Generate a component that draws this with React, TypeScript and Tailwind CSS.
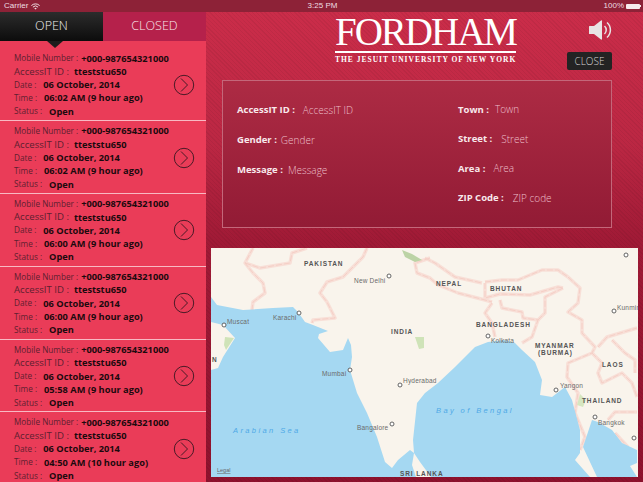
const rows = [
  { time: "06:02 AM (9 hour ago)" },
  { time: "06:02 AM (9 hour ago)" },
  { time: "06:00 AM (9 hour ago)" },
  { time: "06:00 AM (9 hour ago)" },
  { time: "05:58 AM (9 hour ago)" },
  { time: "04:50 AM (10 hour ago)" },
];

function Line({ label, value, gap, size = "text-[8.2px]" }: { label: string; value: string; gap: string; size?: string }) {
  return (
    <div className="flex h-[13.3px] items-center whitespace-nowrap leading-none">
      <span className={`text-[#5e2030] ${size}`}>{label}</span>
      <span className={`text-[9.25px] font-bold text-[#1b0a0e] ${gap}`}>{value}</span>
    </div>
  );
}

function Row({ time, first, last }: { time: string; first: boolean; last: boolean }) {
  return (
    <div
      className={`flex items-center justify-between pl-[14px] pr-[11px] ${first ? "pt-[10.5px] pb-[2px]" : "pt-[3.4px] pb-[2px]"} ${last ? "" : "border-b border-[#f8b9c3]"}`}
    >
      <div>
        <Line label="Mobile Number :" value="+000-987654321000" gap="ml-[3px]" />
        <Line label="AccessIT ID :" value="tteststu650" gap="ml-[5px]" size="text-[9.6px]" />
        <Line label="Date :" value="06 October, 2014" gap="ml-[7px]" />
        <Line label="Time :" value={time} gap="ml-[7px]" />
        <Line label="Status :" value="Open" gap="ml-[7px]" />
      </div>
      <svg width="22" height="22" viewBox="0 0 22 22" fill="none" className="shrink-0">
        <circle cx="11" cy="11" r="9.7" stroke="#4a1a26" strokeWidth="1" />
        <path d="M8 4.5 L14.5 11 L8 17.5" stroke="#4a1a26" strokeWidth="1" />
      </svg>
    </div>
  );
}

function Field({ label, value, gap, height = "h-[30px]" }: { label: string; value: string; gap: string; height?: string }) {
  return (
    <div className={`flex items-center whitespace-nowrap ${height}`}>
      <span className="text-[9.5px] font-bold text-[#f8e9ec]">{label}</span>
      <span className={`text-[10px] font-light text-[#ebbfc9] ${gap}`}>{value}</span>
    </div>
  );
}

const borders = [
  "M253 248 245 263 253 273 263 283 265 293 253 302 252 310",
  "M245 263 260 268 290 263 292 253 307 248",
  "M367 248 363 257 343 277 327 282 320 293 327 302 332 312 335 318 313 320 312 323",
  "M430 258 415 263 417 273 430 278 438 285 458 293 485 300 492 302",
  "M425 258 435 263 455 277 482 283",
  "M485 283 485 298 500 294 530 295 558 287 563 288",
  "M485 282 502 280 518 280 542 270 558 270 568 277",
  "M492 303 485 313 492 323 495 337",
  "M500 300 502 308 522 312 523 318 538 320 532 337 522 343",
  "M563 288 545 297 545 313 538 320",
  "M568 277 580 288 578 303 568 312 582 320 582 333 595 347 592 353 568 363 567 377 578 393 575 413 585 437 580 450",
  "M598 347 607 337 637 328",
  "M592 353 602 363 598 373 602 383 622 373 632 383 637 397",
  "M612 340 625 353 635 360 635 373",
  "M608 420 615 412 637 412",
  "M615 433 628 447",
];

const water1 =
  "M211 477 211 297 217 305 243 310 273 308 293 307 298 312 305 322 313 325 328 331 319 334 318 338 330 352 343 350 348 338 351 345 352 357 350 370 357 393 367 413 377 437 385 462 392 468 398 460 410 450 414 453 413 440 417 403 425 393 438 383 455 367 475 347 488 342 505 340 515 343 522 350 535 362 542 380 540 395 552 397 565 387 572 400 580 430 580 453 575 460 590 477Z";
const water2 = "M597 477 583 447 592 420 598 422 612 430 622 443 637 450 637 463 630 466 637 477Z";

function Map() {
  return (
    <svg
      viewBox="211 248 427 229"
      className="ml-[5px] mt-[20px] block h-[229px] w-[427px] shrink-0"
      style={{ fontFamily: "'Liberation Sans', sans-serif" }}
    >
      <rect x="211" y="248" width="427" height="229" fill="#f9f4ec" />
      <g fill="none" stroke="#f8dfd7" strokeWidth="3.5" strokeLinejoin="round">
        {borders.map((d) => (
          <path key={d} d={d} />
        ))}
      </g>
      <g fill="none" stroke="#f5cfc6" strokeWidth="1" strokeLinejoin="round" strokeDasharray="6 2">
        {borders.map((d) => (
          <path key={d} d={d} />
        ))}
      </g>
      <path d={water1} fill="#a5d8f2" />
      <path d={water2} fill="#a5d8f2" />
      <path d="M211 322 223 325 235 338 223 357 218 368 211 370Z" fill="#f9f4ec" />
      <path d="M414 453 420 462 431 477 416 477 412 465Z" fill="#f9f4ec" />
      <path d="M225 337 234 338 226 350 224 345Z" fill="#cfe3b8" />
      <path d="M415 337 424 337 424 348 419 349Z" fill="#cfe3b8" />
      <path d="M402 250 412 254 422 260 415 262 405 257Z" fill="#bcd3a5" />
      <path d="M580 394 586 400 583 407 577 405Z" fill="#d6e6c0" />
      <g fill="#fff" stroke="#555" strokeWidth="0.9">
        {[
          [389, 276], [299, 313], [224, 325], [350, 370], [400, 385], [392, 424],
          [488, 336], [556, 390], [595, 417], [626, 255], [614, 311], [634, 438],
        ].map(([x, y]) => (
          <circle key={`${x}-${y}`} cx={x} cy={y} r="2" />
        ))}
      </g>
      <g fill="#6b6b6b" fontSize="6.5" letterSpacing="0.2">
        <text x="354" y="283">New Delhi</text>
        <text x="273" y="320">Karachi</text>
        <text x="227" y="324">Muscat</text>
        <text x="322" y="376">Mumbai</text>
        <text x="403" y="383">Hyderabad</text>
        <text x="357" y="430">Bangalore</text>
        <text x="491" y="343">Kolkata</text>
        <text x="560" y="388">Yangon</text>
        <text x="598" y="425">Bangkok</text>
        <text x="617" y="310">Kunming</text>
      </g>
      <g fill="#555" fontSize="6.5" fontWeight="700" letterSpacing="0.9">
        <text x="304" y="266">PAKISTAN</text>
        <text x="391" y="334">INDIA</text>
        <text x="436" y="286">NEPAL</text>
        <text x="490" y="291">BHUTAN</text>
        <text x="476" y="327">BANGLADESH</text>
        <text x="535" y="348">MYANMAR</text>
        <text x="538" y="355">(BURMA)</text>
        <text x="602" y="367">LAOS</text>
        <text x="582" y="403">THAILAND</text>
        <text x="400" y="476">SRI LANKA</text>
        <text x="212" y="362">N</text>
      </g>
      <g fill="#4fa8e6" fontSize="7.5" fontStyle="italic" letterSpacing="2.4">
        <text x="233" y="433">Arabian Sea</text>
        <text x="436" y="413">Bay of Bengal</text>
      </g>
      <text x="217" y="472" fill="#666" fontSize="5.5" textDecoration="underline">Legal</text>
    </svg>
  );
}

export default function App() {
  return (
    <div
      className="flex h-[482px] w-[643px] flex-col overflow-hidden bg-[image:repeating-linear-gradient(45deg,rgba(0,0,0,0.05)_0,rgba(0,0,0,0.05)_1px,transparent_1px,transparent_3px),linear-gradient(180deg,#cc2d4a_0%,#bb2743_30%,#a01a36_50%,#8e122d_100%)]"
      style={{ fontFamily: "'Open Sans', sans-serif" }}
    >
      <div className="flex h-3 shrink-0 items-center justify-between bg-[#8d2237] pl-1 pr-[2px] text-[8px] leading-none text-[#eedde0]" style={{ fontFamily: "'Liberation Sans', sans-serif" }}>
        <div className="flex flex-1 items-center gap-[3px]">
          <span>Carrier</span>
          <svg width="9" height="7" viewBox="0 0 9 7" fill="none" stroke="#eedde0" strokeWidth="1">
            <path d="M.4 2.6a5.8 5.8 0 0 1 8.2 0" />
            <path d="M1.9 4.1a3.7 3.7 0 0 1 5.2 0" />
            <path d="M4.5 6.6 3.3 5.4a1.7 1.7 0 0 1 2.4 0Z" fill="#eedde0" stroke="none" />
          </svg>
        </div>
        <span>3:25 PM</span>
        <div className="flex flex-1 items-center justify-end gap-[2px]">
          <span>100%</span>
          <span className="h-[5px] w-[14px] rounded-[1px] bg-[#f5eaec]" />
          <span className="ml-[-2px] h-[2px] w-px bg-[#f5eaec]" />
        </div>
      </div>

      <div className="flex min-h-0 flex-1">
        <aside className="flex w-[206px] shrink-0 flex-col bg-[#ea3c58]">
          <div className="flex h-[29px] shrink-0 text-[12.5px] font-light">
            <div className="relative flex w-[103px] items-center justify-center bg-[linear-gradient(180deg,#2c2c2c,#0c0c0c)] text-[#f0f0f0]">
              OPEN
              <span className="absolute left-[47px] top-[29px] h-0 w-0 border-x-[8px] border-t-[7px] border-x-transparent border-t-[#1c1c1c]" />
            </div>
            <div className="flex w-[103px] items-center justify-center bg-[#b5214b] text-[#f8e6ea]">CLOSED</div>
          </div>
          {rows.map((r, i) => (
            <Row key={i} time={r.time} first={i === 0} last={i === 5} />
          ))}
        </aside>

        <main className="flex min-w-0 flex-1 flex-col">
          <header className="flex h-[68px] shrink-0 pl-[129px] pt-[5px]">
            <div className="w-[181px] text-white" style={{ fontFamily: "'Liberation Serif', serif" }}>
              <div className="whitespace-nowrap text-center text-[39px] leading-[29px] tracking-[-2px]">FORDHAM</div>
              <div className="mt-[5px] h-[2px] bg-white" />
              <div className="mt-[2px] whitespace-nowrap text-center text-[7.5px] font-bold leading-[9px] tracking-[1px]">THE JESUIT UNIVERSITY OF NEW YORK</div>
            </div>
            <div className="ml-[51px] flex w-[45px] flex-col">
              <svg width="23" height="20" viewBox="0 0 23 20" className="mt-[3px] self-end" fill="none">
                <path d="M0 6.5Q0 6 .5 6H5L12 .5Q13 0 13 1V19Q13 20 12 19.500L5 14H.5Q0 14 0 13.500Z" fill="#e8e4e4" />
                <path d="M15.500 6a5.500 5.500 0 0 1 0 8" stroke="#e8e4e4" strokeWidth="1.500" />
                <path d="M18 2.500a10 10 0 0 1 0 15" stroke="#e8e4e4" strokeWidth="1.500" />
              </svg>
              <button className="mt-[12px] flex h-[18px] w-[45px] items-center justify-center rounded-[2px] bg-[#232323] text-[10px] font-light text-[#d4d4d4]">CLOSE</button>
            </div>
          </header>

          <section className="ml-[16px] flex h-[148px] w-[390px] shrink-0 border border-[#c4677a] bg-[linear-gradient(180deg,#ad2b44,#921b35)] pl-[14px] pt-[14px]">
            <div className="w-[221px]">
              <Field label="AccessIT ID :" value="AccessIT ID" gap="ml-[8px]" />
              <Field label="Gender :" value="Gender" gap="ml-[4px]" />
              <Field label="Message :" value="Message" gap="ml-[5px]" />
            </div>
            <div>
              <Field label="Town :" value="Town" gap="ml-[6px]" height="h-[29.6px]" />
              <Field label="Street :" value="Street" gap="ml-[9px]" height="h-[29.6px]" />
              <Field label="Area :" value="Area" gap="ml-[8px]" height="h-[29.6px]" />
              <Field label="ZIP Code :" value="ZIP code" gap="ml-[9px]" height="h-[29.6px]" />
            </div>
          </section>

          <Map />
        </main>
      </div>
    </div>
  );
}
